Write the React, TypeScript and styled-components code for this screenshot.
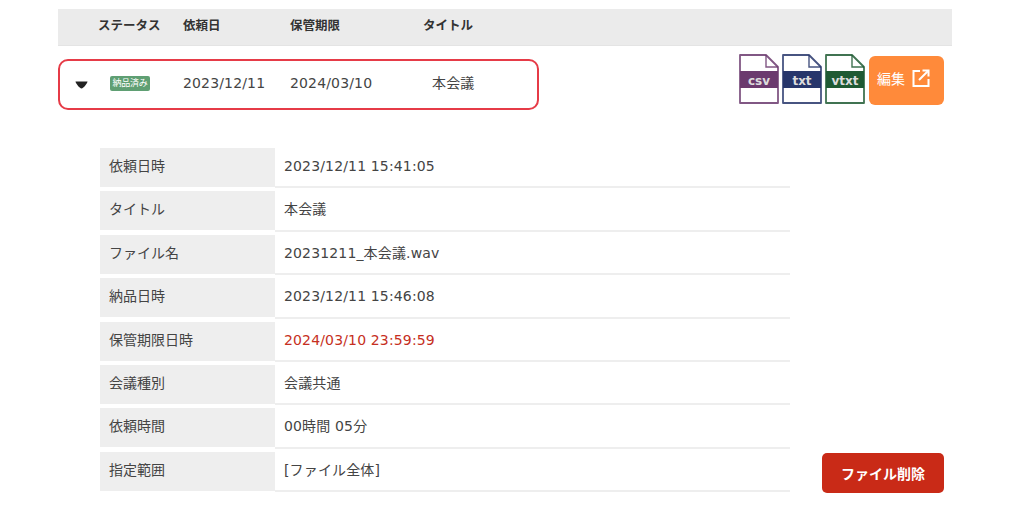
import React from "react";
import styled, { createGlobalStyle } from "styled-components";

const GlobalStyle = createGlobalStyle`
  body {
    margin: 0;
    background: #fff;
    color: #444;
    font-family: "DejaVu Sans", "Noto Sans CJK JP", sans-serif;
    font-size: 14px;
    line-height: 20px;
  }
`;

const Page = styled.div`
  width: 894px;
  margin-left: 58px;
  padding-top: 9px;
`;

const Head = styled.div`
  display: grid;
  grid-template-columns: 85px 107px 133px auto;
  height: 36px;
  padding: 7px 0 0 40px;
  box-sizing: border-box;
  background: #ebebeb;
  font-size: 12.5px;
  font-weight: 700;
  color: #333;
`;

const Rule = styled.div`
  height: 1px;
  background: #e4e4e4;
`;

const RecordLine = styled.div`
  display: flex;
  justify-content: space-between;
  margin-top: 8px;
`;

const Record = styled.div`
  display: grid;
  grid-template-columns: 35px 73px 107px 142px auto;
  align-items: center;
  width: 481px;
  height: 51px;
  box-sizing: border-box;
  margin-top: 5px;
  padding: 0 0 3px 15px;
  border: 2px solid #e63b47;
  border-radius: 10px;
  letter-spacing: 0.15px;
`;

const Arrow = styled.svg`
  width: 13px;
  height: 8px;
  display: block;
  margin-top: 4px;
`;

const Badge = styled.span`
  display: block;
  width: 40px;
  height: 15px;
  background: #5f9f73;
  border-radius: 2px;
  color: #fff;
  font-size: 9px;
  line-height: 14px;
  text-align: center;
  white-space: nowrap;
  letter-spacing: -0.3px;
`;

const Actions = styled.div`
  display: flex;
  align-items: flex-start;
  gap: 3px;
  margin-right: 8px;
`;

const FileSvg = styled.svg`
  width: 40px;
  height: 50px;
  display: block;
`;

const EditButton = styled.button`
  display: flex;
  align-items: center;
  gap: 7px;
  width: 75px;
  height: 49px;
  margin-top: 2px;
  margin-left: 1px;
  padding: 0 0 3px 8px;
  border: 0;
  border-radius: 6px;
  background: #ff8a3a;
  color: #fff;
  font-family: inherit;
  font-size: 14px;
  line-height: 20px;
`;

const EditIcon = styled.svg`
  width: 18px;
  height: 18px;
  display: block;
  margin-bottom: 2px;
`;

const DetailArea = styled.div`
  display: flex;
  align-items: flex-end;
  justify-content: space-between;
  margin: 38px 8px 0 42px;
`;

const Table = styled.div`
  width: 690px;
  margin-bottom: 1px;
  display: flex;
  flex-direction: column;
  gap: 3px;
`;

const TableRow = styled.div`
  display: flex;
  height: 40.4px;
`;

const Label = styled.div`
  width: 175px;
  height: 39px;
  box-sizing: border-box;
  padding: 8px 0 0 9px;
  background: #eeeeee;
`;

const Value = styled.div<{ $alert?: boolean }>`
  flex: 1;
  padding: 8px 0 0 9px;
  border-bottom: 2px solid #eeeeee;
  letter-spacing: 0.15px;
  color: ${(p) => (p.$alert ? "#c62f22" : "#444")};
`;

const DeleteButton = styled.button`
  width: 122px;
  height: 40px;
  padding: 0;
  border: 0;
  border-radius: 5px;
  background: #c92a17;
  color: #fff;
  font-family: inherit;
  font-size: 14px;
  font-weight: 700;
`;

const FileIcon: React.FC<{ label: string; color: string }> = ({ label, color }) => (
  <FileSvg viewBox="0 0 40 50">
    <path d="M1 1H27L39 13V49H1Z" fill="#fff" stroke={color} strokeOpacity="0.85" strokeWidth="1.8" strokeLinejoin="round" />
    <path d="M27 1V13H39" fill="none" stroke={color} strokeOpacity="0.85" strokeWidth="1.4" />
    <rect x="1" y="17" width="38" height="17" fill={color} />
    <text x="20" y="30.5" textAnchor="middle" fill="#dcdcdc" fontSize="12" fontWeight="700" fontFamily="'DejaVu Sans', sans-serif">
      {label}
    </text>
  </FileSvg>
);

const rows = [
  { label: "依頼日時", value: "2023/12/11 15:41:05" },
  { label: "タイトル", value: "本会議" },
  { label: "ファイル名", value: "20231211_本会議.wav" },
  { label: "納品日時", value: "2023/12/11 15:46:08" },
  { label: "保管期限日時", value: "2024/03/10 23:59:59", alert: true },
  { label: "会議種別", value: "会議共通" },
  { label: "依頼時間", value: "00時間 05分" },
  { label: "指定範囲", value: "[ファイル全体]" },
];

export default function App() {
  return (
    <Page>
      <GlobalStyle />
      <Head>
        <span>ステータス</span>
        <span>依頼日</span>
        <span>保管期限</span>
        <span>タイトル</span>
      </Head>
      <Rule />
      <RecordLine>
        <Record>
          <Arrow viewBox="0 0 13 8">
            <path d="M0.5 0.5H12.5C12.5 2 8.5 7.5 6.5 7.5C4.5 7.5 0.5 2 0.5 0.5Z" fill="#222" />
          </Arrow>
          <Badge>納品済み</Badge>
          <span>2023/12/11</span>
          <span>2024/03/10</span>
          <span>本会議</span>
        </Record>
        <Actions>
          <FileIcon label="csv" color="#6b3a6e" />
          <FileIcon label="txt" color="#27366b" />
          <FileIcon label="vtxt" color="#1f5a33" />
          <EditButton>
            編集
            <EditIcon viewBox="0 0 18 18" fill="none" stroke="#fff" strokeWidth="2">
              <path d="M8 2H1.5V17H16.5V10" />
              <path d="M7 11L16 2" />
              <path d="M10.5 1.5H16.5V7.5" />
            </EditIcon>
          </EditButton>
        </Actions>
      </RecordLine>
      <DetailArea>
        <Table>
          {rows.map((row) => (
            <TableRow key={row.label}>
              <Label>{row.label}</Label>
              <Value $alert={row.alert}>{row.value}</Value>
            </TableRow>
          ))}
        </Table>
        <DeleteButton>ファイル削除</DeleteButton>
      </DetailArea>
    </Page>
  );
}
